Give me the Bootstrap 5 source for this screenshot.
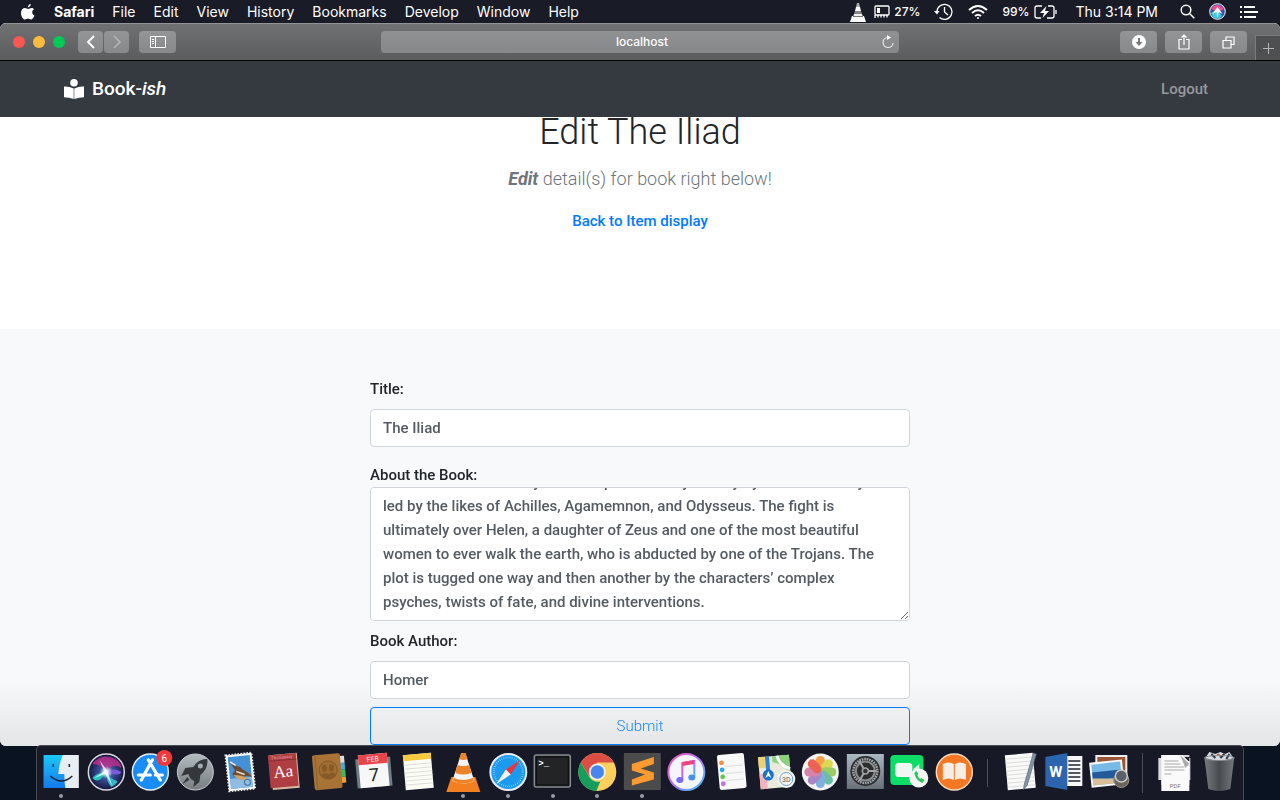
<!DOCTYPE html>
<html lang="en">
<head>
<meta charset="utf-8">
<meta name="viewport" content="width=device-width, initial-scale=1">
<title>Book-ish: Edit The Iliad</title>
<link href="https://cdn.jsdelivr.net/npm/bootstrap@5.3.0/dist/css/bootstrap.min.css" rel="stylesheet">
<style>
  body { background: #0a1322; font-family: Roboto, sans-serif; font-size: 15px; color: #212529; }
  button { font: inherit; }
  .bare { border: 0; background: none; padding: 0; color: inherit; }
  .system-ui { font-family: Inter, sans-serif; font-size: 14px; line-height: 20px; color: #fff; }
  .menu-bar { height: 23px; background: #191b27; padding-left: 20px; padding-right: 22px; }
  .menu-apps { gap: 18px; }
  .menu-status { gap: 14px; }
  .status-text { font-size: 12px; font-weight: 500; }

  .browser { border-radius: 6px; background: #f8f9fa; }
  .tool-bar { display: grid; grid-template-columns: 1fr 40.4% 1fr; height: 38px; border-top: 1px solid #929394; border-bottom: 1px solid #000; background: linear-gradient(#707172, #5b5c5d); }
  .lights { gap: 8px; padding: 0 13px 0 5px; }
  .light { width: 12px; height: 12px; border-radius: 50%; }
  .light-close { background: #fc5753; }
  .light-min { background: #fdbc40; }
  .light-zoom { background: #00ca56; }
  .tool { height: 22px; width: 37px; border: 0; border-radius: 4px; padding: 0; background: linear-gradient(#949596, #87888a); color: #fff; display: flex; align-items: center; justify-content: center; }
  .tool-small { width: 25px; }
  .history { gap: 1px; margin-right: 10px; }
  .address { height: 22px; border-radius: 4px; background: linear-gradient(#909192, #868788); }
  .address input { border: 0; outline: 0; background: none; color: #fff; font-size: 12px; line-height: 16px; text-align: center; font-weight: 500; min-width: 0; }
  .new-tab { width: 25px; height: 25px; background: #4e4f50; border: 1px solid #7b7c7d; border-width: 1px 0 0 1px; color: #b5b5b5; }

  .site-bar { height: 56px; background: #353940; padding: 0 72px 0 64px; }
  .site-bar .navbar-brand { font-size: 19px; font-weight: 500; line-height: 24px; margin: 0; padding: 0; }
  .logout { color: #97999c; font-weight: 500; text-decoration: none; }
  .hero { height: 212px; background: #fff; }
  .hero h1 { font-size: 36px; line-height: 30px; font-weight: 300; margin: 0 0 18px; }
  .hero p { font-size: 18px; line-height: 28px; font-weight: 300; color: #6c757d; margin-bottom: 16px; }
  .hero em { font-weight: 700; }
  .hero a { color: #007bff; font-weight: 500; line-height: 24px; text-decoration: none; }
  .form-area { background: linear-gradient(#f8f9fb 84%, #e4e5e7); padding-top: 48px; }
  .book-form { max-width: 540px; line-height: 24px; }
  .book-form label { font-weight: 500; }
  .book-form .form-control { font-size: 15px; font-weight: 500; line-height: 24px; color: #545b62; border-color: #ced4da; border-radius: 4px; padding: 6px 12px; }
  .book-form .form-control:not(textarea) { height: 38px; }
  .book-form textarea { height: 134px; scrollbar-width: none; }
  .book-form textarea::-webkit-scrollbar { width: 0; }
  .submit { height: 38px; border: 1px solid #007bff; color: #1688f5; border-radius: 4px; padding: 0; font-size: 15px; font-weight: 300; }

  .dock { position: relative; height: 55px; margin: -1px 36px 0; padding: 0 1px 0 2px; background: #171927; border: 1px solid #4b4d55; border-bottom: 0; border-radius: 5px 5px 0 0; }
  .dock svg { display: block; width: 100%; height: 54px; overflow: visible; }
  .dock-app { flex: 1 1 0; min-width: 0; }
  .dock-rule { flex: 0 0 21px; }
  .dock-rule::before { content: ""; display: block; width: 1px; height: 28px; background: #4b4d58; margin: 0 auto; }
  .dock-rule-tall::before { height: 40px; }
  .running { position: relative; }
  .running::after { content: ""; position: absolute; left: calc(50% - 2px); bottom: 2px; width: 4px; height: 4px; border-radius: 50%; background: #9a9ca8; }
</style>
</head>
<body class="d-flex flex-column min-vh-100 overflow-hidden">

<header class="menu-bar system-ui d-flex align-items-center justify-content-between">
  <nav class="menu-apps d-flex align-items-center" aria-label="Menu bar">
    <button class="bare" aria-label="Apple menu"><svg class="d-block" width="16" height="18" viewBox="0 0 16 18" fill="#fff"><path d="M10.8 1c.1 1.800-1.400 3.400-3 3.400C7.600 2.800 9.200 1.100 10.800 1zM14 6.200c-2.600 1.600-2.200 5 .5 6.200-.7 2-2.100 4.100-3.500 4.100-1.200 0-1.600-.7-3-.7s-1.900.7-3 .7C3 16.500 1 13 1 9.900c0-3 1.900-4.800 4-4.800 1.300 0 2.200.8 3.200.8.900 0 2-.9 3.400-.9 1 0 1.900.5 2.400 1.200z"/></svg></button>
    <button class="bare fw-bold">Safari</button>
    <button class="bare">File</button>
    <button class="bare">Edit</button>
    <button class="bare">View</button>
    <button class="bare">History</button>
    <button class="bare">Bookmarks</button>
    <button class="bare">Develop</button>
    <button class="bare">Window</button>
    <button class="bare">Help</button>
  </nav>
  <div class="menu-status d-flex align-items-center">
    <span class="d-flex align-items-center">
      <svg width="16" height="20" viewBox="0 0 16 20"><path d="M7 1h2l1 4H6z" fill="#aaa"/><path d="M6 5h4l1 4H5z" fill="#fff"/><path d="M5 9h6l1 3H4z" fill="#888"/><path d="M4 12h8l1 3H3z" fill="#eee"/><path d="M2 14h12l2 6H0z" fill="#fff"/><path d="M3 14h10v1H3z" fill="#777"/></svg>
      <svg class="ms-2" width="16" height="14" viewBox="0 0 16 14" fill="none" stroke="#fff" stroke-width="1.300"><rect x="1" y="1" width="14" height="9" rx="1"/><path d="M3 3h3v5H3z" fill="#fff" stroke="none"/><path d="M1 10v3M4 10v2.500M7 10v2.500M10 10v2.500M13 10v2.500"/></svg>
      <span class="status-text ms-1">27%</span>
    </span>
    <svg width="20" height="18" viewBox="0 0 20 18" fill="none" stroke="#fff" stroke-width="1.300"><path d="M3 9a7.500 7.500 0 1 1 2.500 5.500"/><path d="M0 8h5.500L3 11.500z" fill="#fff" stroke="none"/><path d="M10.500 4v5l3.500 3"/></svg>
    <svg width="20" height="16" viewBox="0 0 20 16" fill="none" stroke="#fff" stroke-width="2"><path d="M1 6q9-8 18 0M4 9q6-5.500 12 0M7 12q3-2.500 6 0"/><circle cx="10" cy="14" r="1" fill="#fff" stroke="none"/></svg>
    <span class="d-flex align-items-center">
      <span class="status-text">99%</span>
      <svg class="ms-1" width="24" height="14" viewBox="0 0 24 14" fill="none" stroke="#fff" stroke-width="1.300"><path d="M8 1H3a2 2 0 0 0-2 2v8a2 2 0 0 0 2 2h4M14 1h4a2 2 0 0 1 2 2v8a2 2 0 0 1-2 2h-5"/><path d="M12.500 1 6 8h4l-1.500 5L15 6h-4z" fill="#fff" stroke="none"/><path d="M22 5v4"/></svg>
    </span>
    <span class="ms-1">Thu 3:14 PM</span>
    <svg class="ms-2" width="15" height="15" viewBox="0 0 15 15" fill="none" stroke="#fff" stroke-width="1.500"><circle cx="6" cy="6" r="4.800"/><path d="m9.500 9.500 4.800 4.800"/></svg>
    <svg width="17" height="17" viewBox="0 0 17 17"><circle cx="8.500" cy="8.500" r="7.800" fill="#3551a5" stroke="#fff"/><path d="M2 6q6-8 13 0l-6 3z" fill="#ec5090"/><path d="M2 10l6-4 5 7q-5 5-9 1z" fill="#41c8dc"/><path d="m8.500 4 5 7-4-2-1 6-1-6-4 2z" fill="#fff"/></svg>
    <svg width="18" height="14" viewBox="0 0 18 14" stroke="#fff" stroke-width="2"><path d="M0 2h2M4 2h11M0 7h2M4 7h14M0 12h2M4 12h12"/></svg>
  </div>
</header>

<div class="browser flex-grow-1 overflow-hidden d-flex flex-column">
  <div class="tool-bar system-ui align-items-center">
    <div class="d-flex align-items-center ps-2">
      <div class="lights d-flex">
        <span class="light light-close"></span><span class="light light-min"></span><span class="light light-zoom"></span>
      </div>
      <div class="history d-flex">
        <button class="tool tool-small" aria-label="Back"><svg width="10" height="14" viewBox="0 0 10 14" fill="none" stroke="#fff" stroke-width="1.800"><path d="M8 1 2 7l6 6"/></svg></button>
        <button class="tool tool-small" aria-label="Forward"><svg width="10" height="14" viewBox="0 0 10 14" fill="none" stroke="#b6b7b8" stroke-width="1.500"><path d="m2 1 6 6-6 6"/></svg></button>
      </div>
      <button class="tool" aria-label="Sidebar"><svg width="16" height="12" viewBox="0 0 16 12" fill="none" stroke="#fff"><path d="M.5.5h15v11H.5zM5.500 0v12M2 3.500h2M2 5.500h2M2 7.500h2"/></svg></button>
    </div>
    <div class="address d-flex align-items-center">
      <input class="flex-grow-1 ps-4" type="text" value="localhost" aria-label="Address">
      <button class="bare me-1" aria-label="Reload"><svg class="d-block" width="14" height="14" viewBox="0 0 14 14" fill="none" stroke="#eee" stroke-width="1.200"><path d="M7 2.500A5 5 0 1 0 12 8"/><path d="M6 0l4 2.500L6 5z" fill="#fff" stroke="none"/></svg></button>
    </div>
    <div class="d-flex align-items-center justify-content-end gap-2 h-100">
      <button class="tool" aria-label="Downloads"><svg width="14" height="14" viewBox="0 0 14 14"><circle cx="7" cy="7" r="7" fill="#fff"/><path d="M6 3h2v4h2.500L7 11 3.500 7H6z" fill="#777"/></svg></button>
      <button class="tool" aria-label="Share"><svg width="12" height="16" viewBox="0 0 12 16" fill="none" stroke="#fff" stroke-width="1.200"><path d="M4 5.500H1V15h10V5.500H8M6 11V1M3.500 3.500 6 1l2.500 2.500"/></svg></button>
      <button class="tool" aria-label="Show tabs"><svg width="13" height="13" viewBox="0 0 13 13" fill="none" stroke="#fff" stroke-width="1.200"><path d="M1 4.500h8V12H1zM4 4.500V1h8v7.500H9"/></svg></button>
      <button class="new-tab p-0 align-self-end" aria-label="New tab"><svg class="d-block mx-auto" width="11" height="11" viewBox="0 0 11 11" stroke="currentColor"><path d="M5.500 0v11M0 5.500h11"/></svg></button>
    </div>
  </div>

  <nav class="navbar navbar-dark site-bar flex-nowrap">
    <a class="navbar-brand d-flex align-items-center gap-2" href="#">
      <svg width="20" height="20" viewBox="0 0 20 20" fill="#fff"><circle cx="10" cy="3.800" r="3.800"/><path d="M0 7.500q5-.3 9.700 2v10.500Q5 18.300 0 18.200zM20 7.500q-5-.3-9.700 2v10.500q4.700-1.700 9.700-1.800z"/></svg>
      <span>Book-<i>ish</i></span>
    </a>
    <a class="logout" href="#">Logout</a>
  </nav>

  <section class="hero text-center flex-shrink-0">
    <h1>Edit The Iliad</h1>
    <p><em>Edit</em> detail(s) for book right below!</p>
    <a href="#">Back to Item display</a>
  </section>

  <section class="form-area flex-grow-1">
    <form class="book-form mx-auto">
      <label for="title" class="d-block mb-2">Title:</label>
      <input id="title" type="text" class="form-control mb-3" value="The Iliad">
      <label for="about" class="d-block">About the Book:</label>
      <textarea id="about" class="form-control mb-2">The Iliad is an epic poem by Homer.
It is about the war story which depicts the city of Troy by the Greek army
led by the likes of Achilles, Agamemnon, and Odysseus. The fight is
ultimately over Helen, a daughter of Zeus and one of the most beautiful
women to ever walk the earth, who is abducted by one of the Trojans. The
plot is tugged one way and then another by the characters’ complex
psyches, twists of fate, and divine interventions.</textarea>
      <label for="author" class="d-block mb-2">Book Author:</label>
      <input id="author" type="text" class="form-control mb-2" value="Homer">
      <button type="button" class="btn submit w-100">Submit</button>
    </form>
  </section>
</div>

<nav class="dock d-flex align-items-center" aria-label="Dock">
  <button class="bare dock-app running" aria-label="Finder"><svg viewBox="0 0 44 54"><defs><linearGradient id="fb" x2="0" y2="1"><stop stop-color="#1ac8fc"/><stop offset="1" stop-color="#1579ed"/></linearGradient></defs><path d="M4.500 9h35v33h-35z" fill="#e8edf4"/><path d="M4.500 9h19q-4 9-4.500 19h6q0 8 1 14H4.500z" fill="url(#fb)"/><path d="M14 18v3M30 18v3" stroke="#123" stroke-width="1.500"/><path d="M11 30q11 10 22 0" fill="none" stroke="#14202f" stroke-width="1.400"/></svg></button>
  <button class="bare dock-app" aria-label="Siri"><svg viewBox="0 0 44 54"><defs><radialGradient id="si"><stop stop-color="#8fd6ee"/><stop offset=".4" stop-color="#3c4f9a"/><stop offset="1" stop-color="#17163a"/></radialGradient><radialGradient id="sg"><stop stop-color="#fff"/><stop offset="1" stop-color="#fff" stop-opacity="0"/></radialGradient></defs><circle cx="22" cy="26" r="18" fill="url(#si)" stroke="#d9d9e2" stroke-width="1.500"/><path d="M8 18q8-11 21-6 8 4 8 10-9-6-15 4-5-8-14-8z" fill="#c42f8d" opacity=".8"/><path d="M22 26q8-5 15 0-2 5-15 0z" fill="#7a5be0"/><path d="M21 27q-8-1-13 5 6 7 13-5z" fill="#28c2ba"/><path d="M22 27q0 9 5 14 6-3 6-6-7-2-11-8z" fill="#36b6c4"/><path d="m15 14 8 11 5 15-7-12-11 4 10-7z" fill="#dcfbff" opacity=".85"/><circle cx="22" cy="26" r="6" fill="url(#sg)"/></svg></button>
  <button class="bare dock-app" aria-label="App Store"><svg viewBox="0 0 44 54"><circle cx="22" cy="26" r="18" fill="#198cf5" stroke="#e5edf5" stroke-width="1.500"/><path d="m24 14-11 20M20 14l12 20M10 29h12M27 29h7" stroke="#fff" stroke-width="3.200" stroke-linecap="round"/><circle cx="36" cy="12" r="8" fill="#f0393d"/><text x="36" y="15.500" font-size="10" fill="#fff" text-anchor="middle">6</text></svg></button>
  <button class="bare dock-app" aria-label="Launchpad"><svg viewBox="0 0 44 54"><defs><linearGradient id="lp" x2="0" y2="1"><stop stop-color="#b3bbc0"/><stop offset="1" stop-color="#777d80"/></linearGradient></defs><circle cx="22" cy="26" r="18" fill="url(#lp)" stroke="#c6cbcd"/><path d="M34 13q-9 0-14 8l-8 1-4 8 7-2q2 6 6 7l-1 6 6-5 1-7q8-6 7-16z" fill="#34383c"/><circle cx="27" cy="20" r="2.500" fill="#a4abae"/><path d="m14 31-5 7 7-4z" fill="#34383c"/></svg></button>
  <button class="bare dock-app" aria-label="Mail"><svg viewBox="0 0 44 54"><g transform="rotate(-6 22 26)"><path d="M9 8h26v36H9z" fill="#fff" stroke="#eee" stroke-width="2" stroke-dasharray="1.500 1.500"/><path d="M11 10h22v32H11z" fill="#4591d6"/><path d="M11 32h22v10H11z" fill="#8fbce0"/><path d="m12 14 7 6q3 0 6 4 5 3 8 8-5-2-9-1-8 2-10-4l3-3z" fill="#6b4a30"/><path d="m15 28 8 2 7 4-6 0q-6 0-9-6z" fill="#d5a062"/><path d="m13 15 5 4" stroke="#eee" stroke-width="1.500"/><path d="m18 25 8 4" stroke="#e7ddd0" stroke-width="1.500"/><circle cx="28" cy="37" r="3" fill="none" stroke="#3e72a5"/></g></svg></button>
  <button class="bare dock-app" aria-label="Dictionary"><svg viewBox="0 0 44 54"><g transform="rotate(-5 22 26)"><path d="M8 8h28v35H9z" fill="#d8b9a0"/><path d="M7 8h28v33H7z" fill="#ae3e42"/><path d="M7 14h28" stroke="#8c2c32"/><text x="21" y="12.500" font-family="Liberation Serif, serif" font-size="5" text-anchor="middle" fill="#e7abac">Dictionary</text><text x="21" y="31" font-family="Liberation Serif, serif" font-size="17" text-anchor="middle" fill="#fff">Aa</text></g></svg></button>
  <button class="bare dock-app" aria-label="Contacts"><svg viewBox="0 0 44 54"><g transform="rotate(-5 22 26)"><path d="M33 11h5v7h-5z" fill="#ddd"/><path d="M33 18h5v7h-5z" fill="#3eb0da"/><path d="M33 25h5v7h-5z" fill="#45ba5b"/><path d="M33 32h5v6h-5z" fill="#eea132"/><rect x="6" y="8" width="28" height="35" rx="2" fill="#a77436"/><path d="M9 8v35" stroke="#8d602c"/><circle cx="21" cy="24" r="9" fill="#a06e31" stroke="#84592a"/><g fill="#875b29"><ellipse cx="17.500" cy="22" rx="2.600" ry="3.600"/><ellipse cx="24.500" cy="22" rx="2.600" ry="3.600"/><path d="M13 29q4-4 8-1 4-3 8 1-3 4-8 4t-8-4z"/></g></g></svg></button>
  <button class="bare dock-app" aria-label="Calendar"><svg viewBox="0 0 44 54"><g transform="rotate(-5 22 26)"><path d="M4 12h35v29H4z" fill="#6d7d82"/><path d="M7 8h29v33H7z" fill="#f7f7f7"/><path d="M7 8h29v10H7z" fill="#e9444a"/><text x="21.500" y="15.500" font-size="7" text-anchor="middle" fill="#fff">FEB</text><text x="21.500" y="35" font-size="18" text-anchor="middle" fill="#222">7</text></g></svg></button>
  <button class="bare dock-app" aria-label="Notes"><svg viewBox="0 0 44 54"><g transform="rotate(-5 22 26)"><path d="M8 8h28v35H8z" fill="#fcfcf6"/><path d="M8 8h28v6H8z" fill="#f8c93e"/><path d="M8 18h28M8 22h28M8 26h28M8 30h28M8 34h28M8 38h28" stroke="#d8d8d2" stroke-width=".8"/></g></svg></button>
  <button class="bare dock-app running" aria-label="VLC"><svg viewBox="0 0 44 54"><path d="M10 31h24l5 15H5z" fill="#f47f20"/><path d="M20 7h4l9 28q-11 5-22 0z" fill="#f5f5f5"/><path d="M20 7h4l2 6q-4 2-8 0zM16 19q6 2 12 0l2 8q-8 3-16 0zM12.500 32q9 4 19 0l1 3q-11 5-21 0z" fill="#ef8425"/></svg></button>
  <button class="bare dock-app running" aria-label="Safari"><svg viewBox="0 0 44 54"><circle cx="22" cy="26" r="18" fill="#1c9af0" stroke="#e7edf1" stroke-width="2"/><circle cx="22" cy="26" r="14.500" fill="none" stroke="#bde6ff" stroke-width="1.500" stroke-dasharray=".6 1.500"/><path d="m34 14-9.500 14.500-5-5z" fill="#eb3639"/><path d="m10 38 9.500-14.500 5 5z" fill="#f5f5f5"/></svg></button>
  <button class="bare dock-app running" aria-label="Terminal"><svg viewBox="0 0 44 54"><rect x="4" y="9" width="36" height="32" rx="2" fill="#222425" stroke="#868b91" stroke-width="1.500"/><rect x="6" y="11" width="32" height="28" fill="none" stroke="#0b0c0c"/><text x="8" y="20" font-family="Liberation Mono, monospace" font-weight="700" font-size="9" fill="#fff">&gt;_</text></svg></button>
  <button class="bare dock-app running" aria-label="Chrome"><svg viewBox="0 0 44 54"><circle cx="22" cy="26" r="19" fill="#ffcf5c"/><path d="M5.500 16.500a19 19 0 0 1 33 0H22l-8 14z" fill="#dc4e43"/><path d="M5.500 16.500 14 31q4 6 11 4.500L21 45A19 19 0 0 1 5.500 16.500z" fill="#169e5f"/><circle cx="22" cy="26" r="8.500" fill="#f1f1f1"/><circle cx="22" cy="26" r="6.700" fill="#4786ee"/></svg></button>
  <button class="bare dock-app running" aria-label="Sublime Text"><svg viewBox="0 0 44 54"><rect x="3.500" y="7" width="37" height="37" rx="1" fill="#4b4b4b"/><path d="m11.500 18 22-7v7l-13 4.500 13 4v7l-22 6v-6l13-5-13-4z" fill="#fa9a31"/></svg></button>
  <button class="bare dock-app" aria-label="iTunes"><svg viewBox="0 0 44 54"><defs><linearGradient id="it" x2="1" y2="1"><stop stop-color="#fa4f9c"/><stop offset=".5" stop-color="#ac72fd"/><stop offset="1" stop-color="#34d0ef"/></linearGradient></defs><circle cx="22" cy="26" r="18" fill="#f6f5fa" stroke="url(#it)" stroke-width="2"/><path d="M18 33V17l12-2v15" fill="none" stroke="url(#it)" stroke-width="2"/><path d="M18 16l12-2v4l-12 2z" fill="#ed4585"/><ellipse cx="15.500" cy="34" rx="3.500" ry="3" fill="#776bf5"/><ellipse cx="27.500" cy="31.500" rx="3.500" ry="3" fill="#478ff0"/></svg></button>
  <button class="bare dock-app" aria-label="Reminders"><svg viewBox="0 0 44 54"><g transform="rotate(-5 22 26)"><rect x="9" y="8" width="27" height="35" rx="2" fill="#f9f9f9"/><path d="M16 20h18M16 27h18M16 34h18" stroke="#ddd"/><circle cx="13" cy="16" r="2.400" fill="#f3903f"/><circle cx="13" cy="23" r="2.400" fill="#28a7ee"/><circle cx="13" cy="30" r="2.400" fill="#60ca51"/><circle cx="13" cy="37" r="2.400" fill="#c274dc"/></g></svg></button>
  <button class="bare dock-app" aria-label="Maps"><svg viewBox="0 0 44 54"><g transform="rotate(-5 20 26)"><path d="M5 10h31v32H5z" fill="#e9eadc"/><path d="M5 10h7v11H5z" fill="#edd172"/><path d="M19 10h17v23Q33 19 19 16z" fill="#8cd17d"/><path d="M5 27h7v15H5z" fill="#f3b4bc"/><path d="M24 10q1 9 12 14" fill="none" stroke="#fff" stroke-width="3"/><path d="M14 10v17" stroke="#2b81df" stroke-width="4"/></g><circle cx="14" cy="29" r="5.500" fill="#1571d6"/><path d="m14 25 3 7-3-2-3 2z" fill="#fff"/><circle cx="32" cy="33" r="9" fill="#f5f5f5"/><circle cx="32" cy="33" r="6.500" fill="none" stroke="#63a2c9"/><text x="32" y="35.500" font-size="7" fill="#555" text-anchor="middle">3D</text></svg></button>
  <button class="bare dock-app" aria-label="Photos"><svg viewBox="0 0 44 54"><circle cx="22" cy="26" r="18.500" fill="#f4f4f2"/><g opacity=".9"><rect x="17.500" y="10" width="9" height="16" rx="4.500" fill="#f79635"/><rect x="17.500" y="10" width="9" height="16" rx="4.500" fill="#dbd644" transform="rotate(45 22 26)"/><rect x="17.500" y="10" width="9" height="16" rx="4.500" fill="#93c854" transform="rotate(90 22 26)"/><rect x="17.500" y="10" width="9" height="16" rx="4.500" fill="#5cb99c" transform="rotate(135 22 26)"/><rect x="17.500" y="10" width="9" height="16" rx="4.500" fill="#72a8df" transform="rotate(180 22 26)"/><rect x="17.500" y="10" width="9" height="16" rx="4.500" fill="#a07bc2" transform="rotate(225 22 26)"/><rect x="17.500" y="10" width="9" height="16" rx="4.500" fill="#d277a5" transform="rotate(270 22 26)"/><rect x="17.500" y="10" width="9" height="16" rx="4.500" fill="#ed5442" transform="rotate(315 22 26)"/></g></svg></button>
  <button class="bare dock-app" aria-label="System Preferences"><svg viewBox="0 0 44 54"><defs><linearGradient id="sp" x2="0" y2="1"><stop stop-color="#abb8c2"/><stop offset="1" stop-color="#687077"/></linearGradient></defs><path d="M3.500 8h37v35h-37z" fill="url(#sp)"/><circle cx="22" cy="25" r="15" fill="#2b2d2e"/><circle cx="22" cy="25" r="12" fill="none" stroke="#a2a6a9" stroke-width="2.500" stroke-dasharray="1.700 .8"/><circle cx="22" cy="25" r="9.500" fill="none" stroke="#8a8e91" stroke-width="2"/><circle cx="22" cy="25" r="3" fill="#333" stroke="#a2a6a9" stroke-width="1.500"/><path d="M25 25h8M20 22l-4-7M20 28l-4 7" stroke="#a2a6a9" stroke-width="2"/></svg></button>
  <button class="bare dock-app" aria-label="FaceTime"><svg viewBox="0 0 44 54"><rect x="3" y="9" width="33" height="30" rx="4" fill="#0bdd67"/><rect x="8" y="17" width="17" height="14" rx="3" fill="#f3f5f4"/><path d="m26 23 6-5v12l-6-3z" fill="#e4eee6"/><circle cx="31.500" cy="32" r="9.500" fill="#f5f5f5"/><path d="M27 27q1 7 8 10l2-3-3-2-1 1q-2-1-3-4l1-1-2-3z" fill="#20c856"/></svg></button>
  <button class="bare dock-app" aria-label="Books"><svg viewBox="0 0 44 54"><circle cx="22" cy="26" r="18" fill="#f47723" stroke="#f6d9bf" stroke-width="1.500"/><path d="M10.500 18q6-3 11 0v16q-5-3-11 0zM33.500 18q-6-3-11 0v16q5-3 11 0z" fill="#f4eee5"/></svg></button>
  <span class="dock-rule"></span>
  <button class="bare dock-app" aria-label="TextEdit"><svg viewBox="0 0 44 54"><g transform="rotate(-5 22 26)"><path d="M8 8h28v35H8z" fill="#f9f9f7"/><path d="M8 12h28M8 16h28M8 20h28M8 24h28M8 28h28M8 32h28M8 36h28M8 40h28" stroke="#d6d6d6" stroke-width=".8"/></g><path d="m35 7 3 1-9 31-4 5 1-6z" fill="#8195a5" stroke="#50606e" stroke-width=".6"/></svg></button>
  <button class="bare dock-app" aria-label="Word"><svg viewBox="0 0 44 54"><path d="M24 10h16v30H24z" fill="#f7f7f7"/><path d="M26 15h12M26 19h12M26 23h12M26 27h12M26 31h12M26 35h12" stroke="#20242c" stroke-width="1.300"/><path d="m3 11 22-4v37L3 40z" fill="#2c65ae"/><text x="13.500" y="31" font-size="15" font-weight="700" text-anchor="middle" fill="#fff">W</text></svg></button>
  <button class="bare dock-app" aria-label="Preview"><svg viewBox="0 0 44 54"><path d="M8 9h32v26H8z" fill="#f0f0f0"/><path d="M10 11h28v22H10z" fill="#9b5735"/><g transform="rotate(-6 20 28)"><path d="M3 15h33v25H3z" fill="#f8f8f8"/><path d="M5 17h29v21H5z" fill="#79b9e5"/><path d="M5 25h29v8H5z" fill="#24599a"/><path d="m5 31 20 2v5H5z" fill="#d6bf99"/></g><circle cx="34" cy="34" r="7.500" fill="#6b6459" stroke="#99968a"/><circle cx="34" cy="30" r="6" fill="#59626b" stroke="#c8cac5" stroke-width="1.500"/></svg></button>
  <span class="dock-rule dock-rule-tall"></span>
  <button class="bare dock-app" aria-label="Documents"><svg viewBox="0 0 44 54"><path d="M5 12h32v22H5zM8 9h28v30H8z" fill="#d9d9d9"/><path d="M22 11h14v4H22z" fill="#222"/><path d="M8 9h21l7 7v29H8z" fill="#fafafa"/><path d="m27 9 9 9-4 4z" fill="#aaa"/><path d="M11 15h14M11 18h16M11 21h20M11 24h20M11 28h7" stroke="#aaa"/><text x="22" y="42" font-size="6" text-anchor="middle" fill="#777">PDF</text></svg></button>
  <button class="bare dock-app" aria-label="Trash"><svg viewBox="0 0 44 54"><defs><linearGradient id="tr"><stop stop-color="#777b7d"/><stop offset=".5" stop-color="#484c50"/><stop offset="1" stop-color="#74787b"/></linearGradient></defs><path d="M7 11q15 6 30 0l-4 32q-11 4-22 0z" fill="url(#tr)"/><path d="m8 12 4-6 6 2 5-2 5 2 4-2 4 6q-14 5-28 0z" fill="#d8dcdf"/><path d="m14 8 4 4M27 8l-4 4M32 8l-3 5" stroke="#253243" stroke-width="2"/><path d="m20 8 3 2" stroke="#d65a2c" stroke-width="2"/><ellipse cx="22" cy="12" rx="15" ry="2.500" fill="none" stroke="#85898c"/></svg></button>
</nav>

<script src="https://cdn.jsdelivr.net/npm/bootstrap@5.3.0/dist/js/bootstrap.bundle.min.js"></script>
<script>
  // Open the description at its last lines.
  const about = document.getElementById('about');
  about.scrollTop = about.scrollHeight;
</script>
</body>
</html>
